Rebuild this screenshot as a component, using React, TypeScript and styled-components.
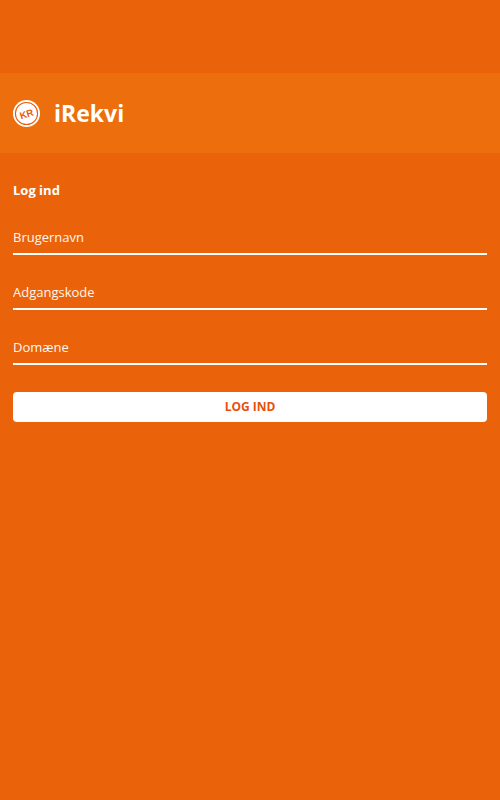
import React from "react";
import styled, { createGlobalStyle } from "styled-components";

const GlobalStyle = createGlobalStyle`
  *, *::before, *::after { box-sizing: border-box; }
  body {
    margin: 0;
    background: #ea630a;
    color: #fff;
    font-family: "Open Sans", "Noto Sans", sans-serif;
  }
`;

const Page = styled.div`
  min-height: 100vh;
  padding-top: 73px;
`;

const Header = styled.header`
  display: flex;
  align-items: center;
  gap: 14px;
  height: 80px;
  padding: 0 13px;
  background: #ed6e0c;
`;

const Logo = styled.svg`
  width: 27px;
  height: 27px;
  flex: none;
`;

const LogoText = styled.text`
  font: bold 10px "Liberation Sans", Arial, sans-serif;
  fill: #ea5a0a;
`;

const Brand = styled.h1`
  margin: 0;
  font-size: 23px;
  line-height: 32px;
  font-weight: 700;
`;

const LoginForm = styled.form`
  display: flex;
  flex-direction: column;
  padding: 27px 13px;
`;

const Title = styled.h2`
  margin: 0 0 18px;
  font-size: 13px;
  line-height: 20px;
  font-weight: 700;
`;

const Fields = styled.div`
  display: flex;
  flex-direction: column;
  gap: 18px;
`;

const Field = styled.input`
  width: 100%;
  height: 37px;
  padding: 2px 0 0;
  border: 0;
  border-bottom: 2px solid #fff;
  border-radius: 0;
  outline: none;
  background: transparent;
  color: #fff;
  font-family: inherit;
  font-size: 13px;

  &::placeholder {
    color: #fff;
    opacity: 0.95;
  }
`;

const SubmitButton = styled.button`
  height: 30px;
  margin-top: 27px;
  padding: 0 0 2px;
  border: 0;
  border-radius: 4px;
  background: #fff;
  color: #e8500a;
  font-family: inherit;
  font-size: 12px;
  font-weight: 700;
  text-transform: uppercase;
  cursor: pointer;
`;

const fields = [
  { name: "username", label: "Brugernavn", type: "text" },
  { name: "password", label: "Adgangskode", type: "password" },
  { name: "domain", label: "Domæne", type: "text" },
];

export default function App() {
  return (
    <>
      <GlobalStyle />
      <Page>
        <Header>
          <Logo viewBox="0 0 28 28" aria-hidden="true">
            <circle cx="14" cy="14" r="14" fill="#fff" />
            <circle cx="14" cy="14" r="11.5" fill="none" stroke="#ea5a0a" strokeWidth="1.1" />
            <LogoText x="14" y="18" textAnchor="middle" transform="rotate(-17 14 14)">
              KR
            </LogoText>
          </Logo>
          <Brand>iRekvi</Brand>
        </Header>
        <LoginForm onSubmit={(event: React.FormEvent) => event.preventDefault()}>
          <Title>Log ind</Title>
          <Fields>
            {fields.map((field) => (
              <Field
                key={field.name}
                name={field.name}
                type={field.type}
                placeholder={field.label}
                aria-label={field.label}
              />
            ))}
          </Fields>
          <SubmitButton type="submit">Log ind</SubmitButton>
        </LoginForm>
      </Page>
    </>
  );
}
